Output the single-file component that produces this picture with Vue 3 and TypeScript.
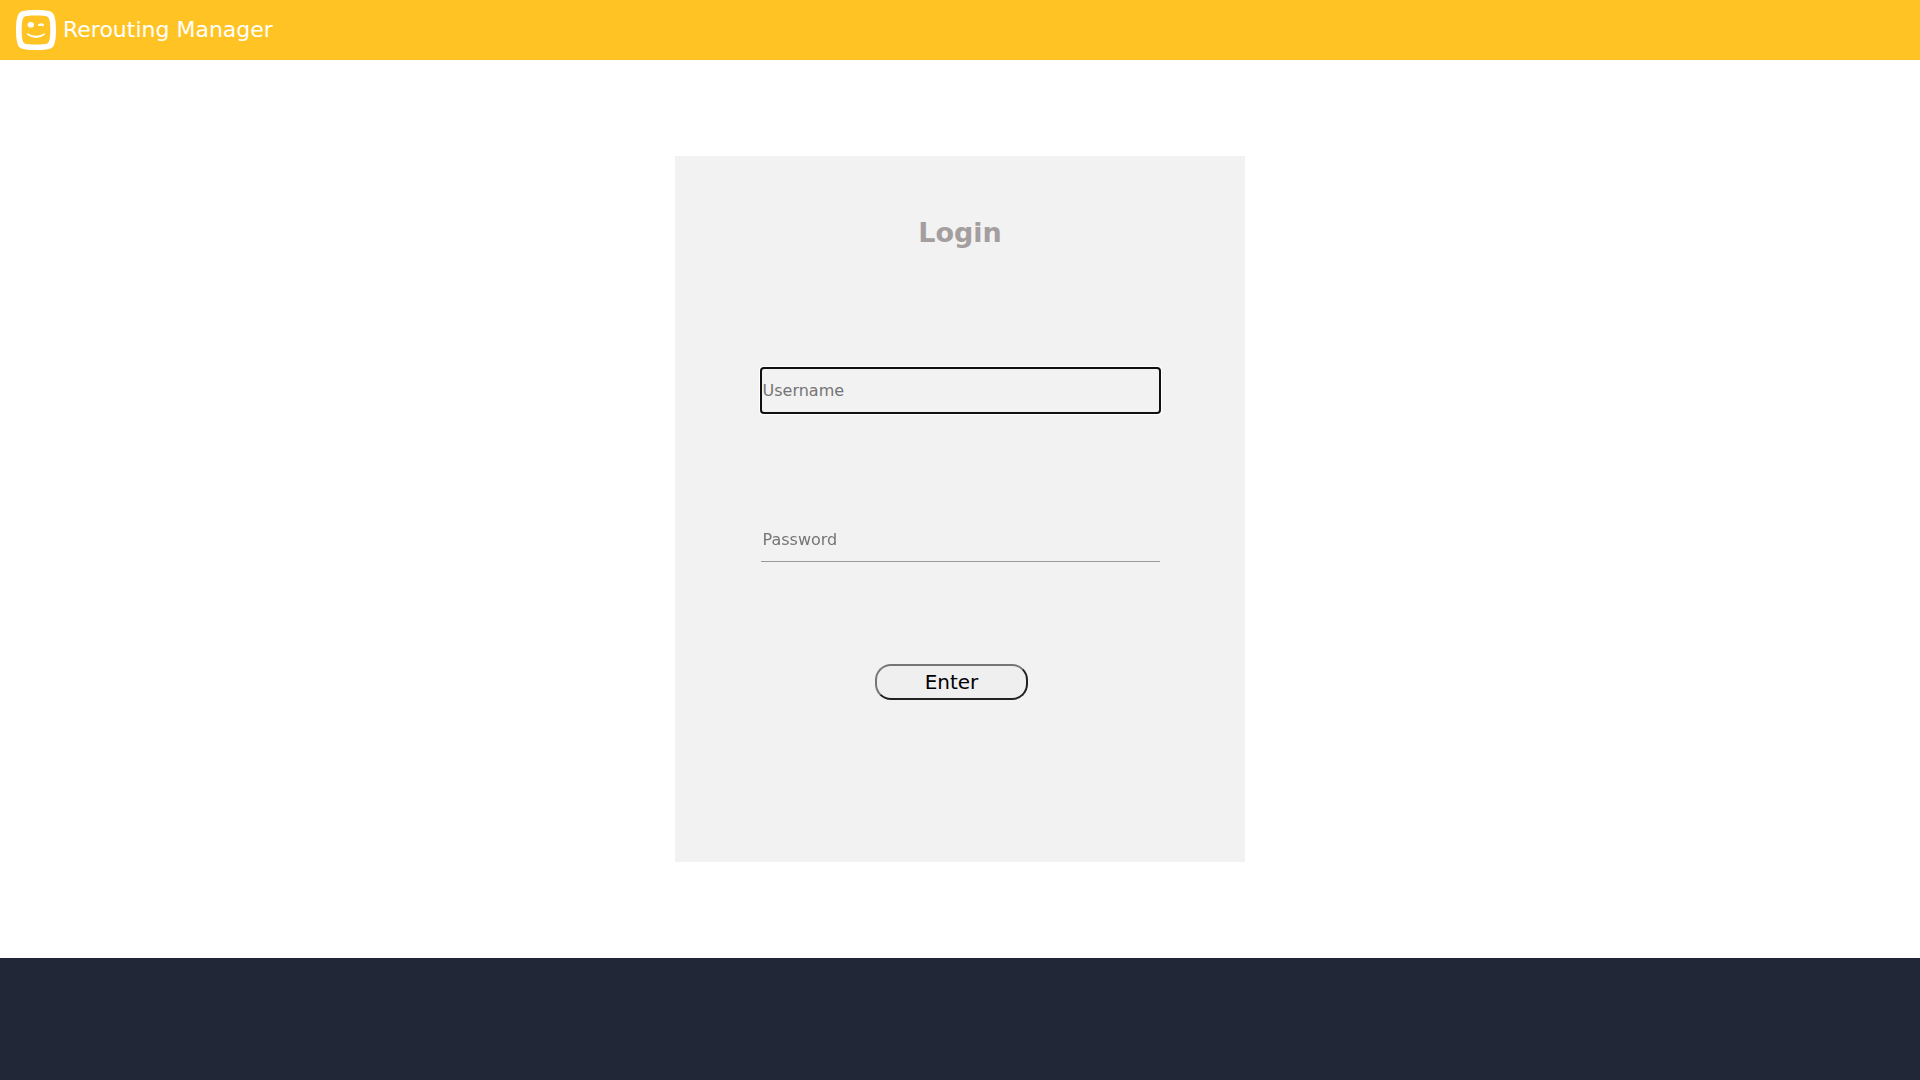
<script setup lang="ts">
import { onMounted, ref } from 'vue'

const username = ref<string>('')
const password = ref<string>('')
const usernameField = ref<HTMLInputElement | null>(null)

onMounted(() => usernameField.value?.focus())
</script>

<template>
  <div class="page">
    <header class="topbar">
      <svg class="logo" viewBox="0 0 40 40" aria-hidden="true">
        <path
          fill="#fff"
          fill-rule="evenodd"
          d="M20 0C28 0 33 .6 35.500 2C38.500 3.500 40 10 40 20C40 30 38.500 36.500 35.500 38C33 39.400 28 40 20 40C12 40 7 39.400 4.500 38C1.500 36.500 0 30 0 20C0 10 1.500 3.500 4.500 2C7 .6 12 0 20 0ZM20 5.500C13 5.500 9.500 6 8 7C6.300 8.500 5.700 13 5.700 20C5.700 27 6.300 31.500 8 33C9.500 34.100 13 34.500 20 34.500C27 34.500 30.500 34.100 32 33C33.700 31.500 34.300 27 34.300 20C34.300 13 33.700 8.500 32 7C30.500 6 27 5.500 20 5.500Z"
        />
        <ellipse cx="14.800" cy="14.800" rx="3.200" ry="2.800" fill="#fff" />
        <path
          d="M22.500 14.300Q25 12.700 27.300 13.800Q28.500 15 27.800 16.200Q25 15.600 22.300 16Q21.400 15.300 22.500 14.300ZM11.600 23.200Q20 28.200 28.400 23.200Q29.600 23.600 28.600 25Q20 31 11.400 25Q10.400 23.600 11.600 23.200Z"
          fill="#fff"
        />
      </svg>
      <span class="brand">Rerouting Manager</span>
    </header>

    <main class="content">
      <form class="card" @submit.prevent>
        <h1 class="title">Login</h1>
        <input
          ref="usernameField"
          v-model="username"
          class="field"
          type="text"
          placeholder="Username"
          aria-label="Username"
        />
        <input
          v-model="password"
          class="field"
          type="password"
          placeholder="Password"
          aria-label="Password"
        />
        <button class="submit" type="submit">Enter</button>
      </form>
    </main>

    <footer class="footer"></footer>
  </div>
</template>

<style>
body {
  margin: 0;
}
</style>

<style scoped>
.page {
  display: flex;
  flex-direction: column;
  min-height: 100vh;
  background: #fff;
  font-family: "DejaVu Sans", sans-serif;
}

.topbar {
  display: flex;
  align-items: center;
  gap: 7px;
  height: 60px;
  padding: 0 16px;
  background: #ffc423;
}

.logo {
  width: 40px;
  height: 40px;
}

.brand {
  color: #fff;
  font-size: 22px;
  line-height: 28px;
}

.content {
  display: flex;
  flex: 1;
  justify-content: center;
  padding: 96px 16px;
}

.card {
  display: flex;
  flex-direction: column;
  align-items: center;
  box-sizing: border-box;
  width: 100%;
  max-width: 570px;
  padding: 61px 0 162px;
  background: #f2f2f2;
}

.title {
  margin: 0;
  color: #a49e9e;
  font-size: 27px;
  line-height: 32px;
}

.field {
  box-sizing: border-box;
  width: 70%;
  height: 45px;
  margin-top: 104px;
  padding: 1px 2px;
  border: 0;
  border-bottom: 1px solid #999;
  background: transparent;
  color: #757575;
  font-family: inherit;
  font-size: 16px;
}

.title + .field {
  margin-top: 119px;
}

.submit {
  width: 153px;
  height: 36px;
  margin: 102px 17px 0 0;
  padding: 0;
  border: 2px solid;
  border-color: #767676 #212121 #212121 #767676;
  border-radius: 16px;
  background: #efefef;
  color: #000;
  font-family: inherit;
  font-size: 20px;
}

.footer {
  height: 122px;
  background: #212736;
}
</style>
